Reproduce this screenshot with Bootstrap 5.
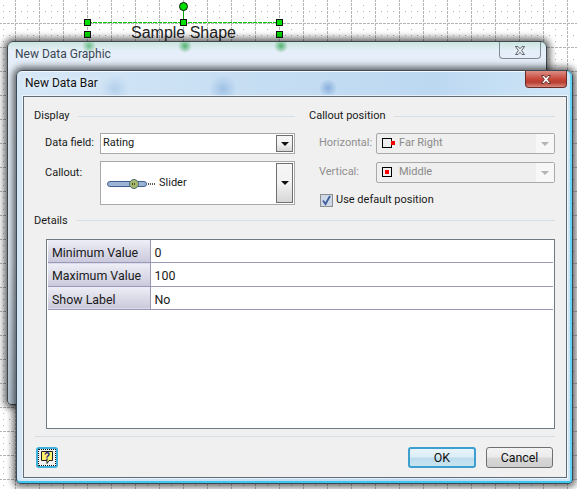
<!DOCTYPE html>
<html>
<head>
  <meta charset="utf-8">
  <meta name="viewport" content="width=device-width, initial-scale=1">
  <title>New Data Bar</title>
  <link href="https://cdn.jsdelivr.net/npm/bootstrap@5.3.0/dist/css/bootstrap.min.css" rel="stylesheet">
  <style>
    html, body { margin: 0; background: #fff; overflow: hidden; }
    .drawing { width: 577px; height: 489px; font-family: Roboto, "Liberation Sans", sans-serif; font-size: 11px; color: #1a1a1a; }
    .grid-layer, .handles { left: 0; top: 0; }
    .shape-label { left: 131px; top: 24px; font-family: "Liberation Sans", sans-serif; font-size: 16px; line-height: 18px; color: #222; }

    .win-back, .win-front { border: 1px solid #3f474d; border-radius: 6px 6px 4px 4px; box-shadow: 0 0 7px 3px rgba(0,0,0,.6); }
    .win-back { left: 7px; top: 41px; width: 540px; height: 364px;
      background:
        radial-gradient(circle at 81px 4px, rgba(40,160,70,.6) 0, rgba(40,160,70,0) 7px),
        radial-gradient(circle at 177px 4px, rgba(40,160,70,.75) 0, rgba(40,160,70,0) 7px),
        radial-gradient(circle at 273px 4px, rgba(40,160,70,.75) 0, rgba(40,160,70,0) 7px),
        linear-gradient(rgba(120,200,150,.25), rgba(120,200,150,0) 9px),
        linear-gradient(#e6eff9, #dfeaf6 60%, #b9c9d8); }
    .back-title { padding: 3px 0 0 7px; color: #3a4652; font-size: 12px; line-height: 18px; }
    .back-close { right: 5px; top: 0; width: 42px; height: 17px; border: 1px solid #7f8a94; border-top: 0; border-radius: 0 0 4px 4px; }

    .win-front { left: 16px; top: 70px; width: 557px; height: 414px; border-color: #3c4a55;
      background:
        radial-gradient(circle at 98px 18px, rgba(120,165,215,.3) 0, rgba(120,165,215,0) 14px),
        radial-gradient(circle at 206px 18px, rgba(100,150,210,.4) 0, rgba(100,150,210,0) 14px),
        radial-gradient(circle at 311px 17px, rgba(90,140,205,.55) 0, rgba(90,140,205,0) 9px),
        linear-gradient(90deg, #d6e7f7, #c5ddf2 45%, #bcd8f1 75%, #cfe6f7 100%);
      box-shadow: 0 0 7px 3px rgba(0,0,0,.6), inset 0 -2px 0 #3fc6ee, inset -2px 0 0 #62d2f2, inset 0 1px 0 #f4f9fd; }
    .front-title { height: 25px; padding: 3px 0 0 8px; font-size: 12px; line-height: 18px; color: #111; text-shadow: 0 0 5px #fff; }
    .front-close { right: 5px; top: 0; width: 42px; height: 17px; border: 1px solid #6b2c28; border-top: 0; border-radius: 0 0 4px 4px;
      background: linear-gradient(#dc8f85, #c8473a 50%, #b73d30 70%, #d9897c); }
    .dlg-panel { margin: 0 5px 5px 6px; background: #f0f0f0; border: 1px solid #5f6c76; padding: 11px 11px 0 10px; box-shadow: 0 0 0 1px rgba(255,255,255,.6); }

    .sec-head { height: 16px; line-height: 16px; }
    .sec-rule { height: 1px; background: #d5dfe5; }
    .col-left { width: 261px; }
    .col-right { width: 246px; }
    .field-lab { width: 55px; padding-left: 11px; white-space: nowrap; box-sizing: content-box; flex: none; }
    .lab-off { width: 57px; padding-left: 10px; color: #8f8f8f; flex: none; box-sizing: content-box; }
    .combo { height: 21px; border: 1px solid #a9a9a9; background: #fff; padding-left: 2px; }
    .combo-tall { height: 44px; padding-left: 6px; }
    .combo-btn { width: 17px; margin: 1px 1px 1px 0; border: 1px solid #6f6f6f; background: linear-gradient(#f6f6f6, #f2f2f2 50%, #d6d6d6); flex: none; }
    .combo-off { height: 21px; border: 1px solid #a9a9a9; border-radius: 2px; background: #efefef; padding-left: 5px; color: #8a8a8a; }
    .combo-arrow { width: 18px; background: #f7f7f7; flex: none; }
    .tri { width: 0; height: 0; border-left: 4px solid transparent; border-right: 4px solid transparent; border-top: 4px solid #111; }
    .tri-off { border-top-color: #b4b4b4; }
    .pick-check { width: 13px; height: 13px; border: 1px solid #8e8f8f; background: #cfd8e6; }

    .prop-box { height: 190px; border: 1px solid #6f7a84; background: #fff; padding: 0 1px; font-size: 12.4px; }
    .prop-table { width: 100%; border-collapse: collapse; }
    .prop-table td { height: 23px; padding: 4px 0 0 4px; border-bottom: 1px solid #9a98b8; }
    .prop-table .prop-name { width: 102px; background: linear-gradient(#eeeef6, #d8d8e6 60%, #c9c9dc); border-right: 1px solid #9a98b8; }
    .prop-table .prop-val { padding-left: 4px; }

    .foot-rule { height: 1px; background: #d8dfe4; margin: 7px 0 10px 1px; width: 520px; }
    .help-btn { width: 22px; height: 21px; margin-left: 2px; padding: 1px; border: 2px solid #3fb2dc; border-radius: 3px; background: #f0f0f0; outline: 1px dotted #111; outline-offset: -3px; }
    .dlg-btn { width: 67px; height: 21px; padding: 0; font-size: 12.4px; line-height: 17px; color: #111; border: 1px solid #707070; border-radius: 3px; background: linear-gradient(#f3f3f3, #ebebeb 48%, #d8d8d8 52%, #cfcfcf); }
    .dlg-btn:hover { color: #111; border-color: #707070; }
    .dlg-ok { width: 68px; border: 2px solid #3c9fd0; background: linear-gradient(#e8f4fa, #dcedf6 48%, #bcdcec 52%, #c8e4f0); line-height: 15px; }
  </style>
</head>
<body>
  <div class="drawing position-relative overflow-hidden">
    <!-- drawing page grid -->
    <svg class="grid-layer position-absolute" width="577" height="489">
      <defs>
        <pattern id="page-grid" width="24" height="24" x="15" y="23" patternUnits="userSpaceOnUse">
          <line x1="0.5" y1="0" x2="0.5" y2="24" stroke="#b4b4b4" stroke-dasharray="3 1"/>
          <line x1="0" y1="0.5" x2="24" y2="0.5" stroke="#b4b4b4" stroke-dasharray="3 1"/>
          <line x1="12.5" y1="0" x2="12.5" y2="24" stroke="#b4b4b4" stroke-dasharray="1 5"/>
          <line x1="0" y1="12.5" x2="24" y2="12.5" stroke="#b4b4b4" stroke-dasharray="1 5"/>
        </pattern>
      </defs>
      <rect width="577" height="489" fill="url(#page-grid)"/>
    </svg>

    <div class="shape-label position-absolute">Sample Shape</div>

    <!-- selection handles -->
    <svg class="handles position-absolute" width="577" height="60">
      <line x1="88" y1="22.5" x2="280" y2="22.5" stroke="#00d000" stroke-dasharray="4 1"/>
      <line x1="183.5" y1="8" x2="183.5" y2="22" stroke="#00a000"/>
      <circle cx="183.5" cy="6.5" r="4" fill="#00e000" stroke="#111"/>
      <g fill="#00e000" stroke="#111">
        <rect x="84.5" y="19.5" width="6" height="6"/>
        <rect x="180.5" y="19.5" width="6" height="6"/>
        <rect x="276.5" y="19.5" width="6" height="6"/>
        <rect x="84.5" y="31.5" width="6" height="6"/>
        <rect x="276.5" y="31.5" width="6" height="6"/>
      </g>
    </svg>

    <!-- window behind -->
    <div class="win-back position-absolute">
      <div class="back-title">New Data Graphic</div>
      <div class="back-close position-absolute d-flex align-items-center justify-content-center">
        <svg width="12" height="11" viewBox="0 0 12 11"><path d="M1.500 1.500h2.500L6 3.700 8 1.500h2.500L7.700 5.500l2.800 4H8L6 7.300 4 9.500H1.500l2.800-4z" fill="#e8edf2" stroke="#5d666e"/></svg>
      </div>
    </div>

    <!-- dialog in front -->
    <div class="win-front position-absolute d-flex flex-column">
      <div class="front-title">New Data Bar</div>
      <div class="front-close position-absolute d-flex align-items-center justify-content-center">
        <svg width="12" height="11" viewBox="0 0 12 11"><path d="M1.500 1.500h2.500L6 3.700 8 1.500h2.500L7.700 5.500l2.800 4H8L6 7.300 4 9.500H1.500l2.800-4z" fill="#fff" stroke="#6b3a35"/></svg>
      </div>

      <div class="dlg-panel flex-grow-1">
        <div class="d-flex" style="gap: 14px">
          <div class="col-left">
            <div class="sec-head d-flex align-items-center gap-2">Display<div class="sec-rule flex-grow-1"></div></div>
            <div class="d-flex align-items-center" style="margin-top: 9px">
              <div class="field-lab">Data field:</div>
              <div class="combo flex-grow-1 d-flex align-items-center justify-content-between">Rating
                <div class="combo-btn align-self-stretch d-flex align-items-center justify-content-center"><div class="tri"></div></div>
              </div>
            </div>
            <div class="d-flex" style="margin-top: 7px">
              <div class="field-lab" style="padding-top: 4px">Callout:</div>
              <div class="combo combo-tall flex-grow-1 d-flex align-items-center justify-content-between">
                <div class="d-flex align-items-center" style="margin-top: 1px; gap: 3px">
                  <svg width="49" height="12" viewBox="0 0 49 12">
                    <rect x="0.500" y="3.500" width="39" height="5" rx="2.500" fill="#9db4d4" stroke="#3f6290"/>
                    <circle cx="27" cy="6" r="4.500" fill="#a6b96a" stroke="#4f6a80"/>
                    <path d="M25 6h4M41 6h7" stroke="#222" stroke-width="1.500" stroke-dasharray="1 1"/>
                  </svg>
                  <span>Slider</span>
                </div>
                <div class="combo-btn align-self-stretch d-flex align-items-center justify-content-center"><div class="tri"></div></div>
              </div>
            </div>
          </div>

          <div class="col-right">
            <div class="sec-head d-flex align-items-center gap-2">Callout position<div class="sec-rule flex-grow-1"></div></div>
            <div class="d-flex align-items-center" style="margin-top: 9px">
              <div class="lab-off">Horizontal:</div>
              <div class="combo-off flex-grow-1 d-flex align-items-center">
                <svg width="14" height="11" viewBox="0 0 14 11" style="margin-right: 3px"><rect x="0.500" y="0.500" width="9" height="9" fill="none" stroke="#000"/><rect x="9" y="3" width="4" height="4" fill="#f00"/></svg>
                <span class="flex-grow-1">Far Right</span>
                <div class="combo-arrow align-self-stretch d-flex align-items-center justify-content-center"><div class="tri tri-off"></div></div>
              </div>
            </div>
            <div class="d-flex align-items-center" style="margin-top: 8px">
              <div class="lab-off">Vertical:</div>
              <div class="combo-off flex-grow-1 d-flex align-items-center">
                <svg width="14" height="11" viewBox="0 0 14 11" style="margin-right: 3px"><rect x="0.500" y="0.500" width="9" height="9" fill="none" stroke="#000"/><rect x="3" y="3" width="4" height="4" fill="#f00"/></svg>
                <span class="flex-grow-1">Middle</span>
                <div class="combo-arrow align-self-stretch d-flex align-items-center justify-content-center"><div class="tri tri-off"></div></div>
              </div>
            </div>
            <div class="d-flex align-items-center" style="margin: 9px 0 0 11px; gap: 3px">
              <div class="pick-check d-flex align-items-center justify-content-center">
                <svg width="11" height="11" viewBox="0 0 11 11"><path d="M2 5.500l2.500 3.500L9 1" fill="none" stroke="#3f5f9c" stroke-width="1.800"/></svg>
              </div>
              <span>Use default position</span>
            </div>
          </div>
        </div>

        <div class="sec-head d-flex align-items-center gap-2" style="margin-top: 4px">Details<div class="sec-rule flex-grow-1"></div></div>

        <div class="prop-box" style="margin: 10px 0 0 12px">
          <table class="prop-table">
            <tr><td class="prop-name">Minimum Value</td><td class="prop-val">0</td></tr>
            <tr><td class="prop-name">Maximum Value</td><td class="prop-val">100</td></tr>
            <tr><td class="prop-name">Show Label</td><td class="prop-val">No</td></tr>
          </table>
        </div>

        <div class="foot-rule"></div>

        <div class="d-flex align-items-center">
          <div class="help-btn d-flex align-items-center justify-content-center">
            <svg width="14" height="15" viewBox="0 0 14 15">
              <path d="M1.500 1.500h11v9H9l-2 3v-3H1.500z" fill="#fff36a" stroke="#222"/>
              <text x="7" y="9.500" text-anchor="middle" font-family="Liberation Sans" font-weight="700" font-size="10" fill="#1a1a8c">?</text>
            </svg>
          </div>
          <button type="button" class="btn dlg-btn dlg-ok ms-auto">OK</button>
          <button type="button" class="btn dlg-btn" style="margin: 0 2px 0 10px">Cancel</button>
        </div>
      </div>
    </div>
  </div>

  <script src="https://cdn.jsdelivr.net/npm/bootstrap@5.3.0/dist/js/bootstrap.bundle.min.js"></script>
</body>
</html>
